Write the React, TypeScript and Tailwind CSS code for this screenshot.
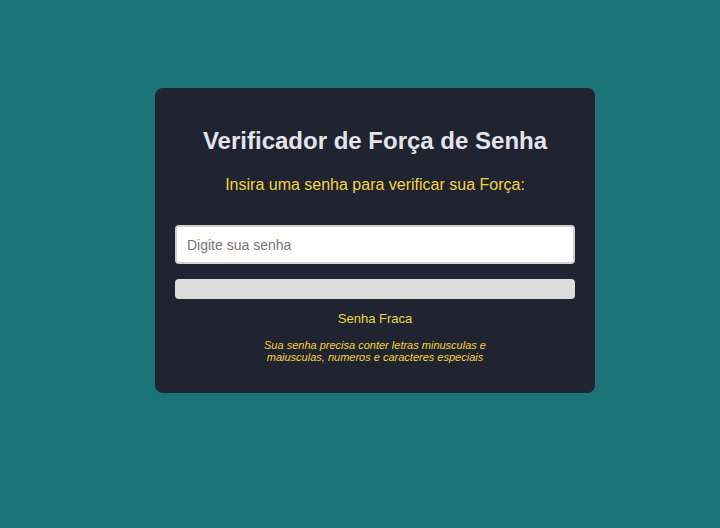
import React from "react";

export default function App() {
  return (
    <div
      className="min-h-[528px] w-full bg-[#1b7477] pt-[88px] pl-[155px]"
      style={{ fontFamily: '"Liberation Sans", Arial, sans-serif' }}
    >
      <div className="w-[440px] rounded-lg bg-[#202330] px-5 pt-[39px] pb-[30px] text-center">
        <h1 className="text-[24px] font-bold leading-[28px] text-[#e4e4ea]">
          Verificador de Força de Senha
        </h1>
        <p className="mt-[21px] text-[16px] leading-[18px] text-[#f5d442]">
          Insira uma senha para verificar sua Força:
        </p>
        <input
          type="password"
          placeholder="Digite sua senha"
          className="mt-[31px] block h-[39px] w-full rounded-[4px] border-2 border-[#d0d0d4] bg-white px-[10px] text-[14px] text-[#333] placeholder:text-[#757575] outline-none"
        />
        <div className="mt-[15px] h-[20px] w-full rounded-[4px] bg-[#dcdcdc]" />
        <p className="mt-[12px] text-[13px] leading-[16px] text-[#f5d442]">
          Senha Fraca
        </p>
        <p className="mx-auto mt-[12px] w-[240px] text-[11px] italic leading-[12px] text-[#f5d442]">
          Sua senha precisa conter letras minusculas e maiusculas, numeros e caracteres especiais
        </p>
      </div>
    </div>
  );
}
